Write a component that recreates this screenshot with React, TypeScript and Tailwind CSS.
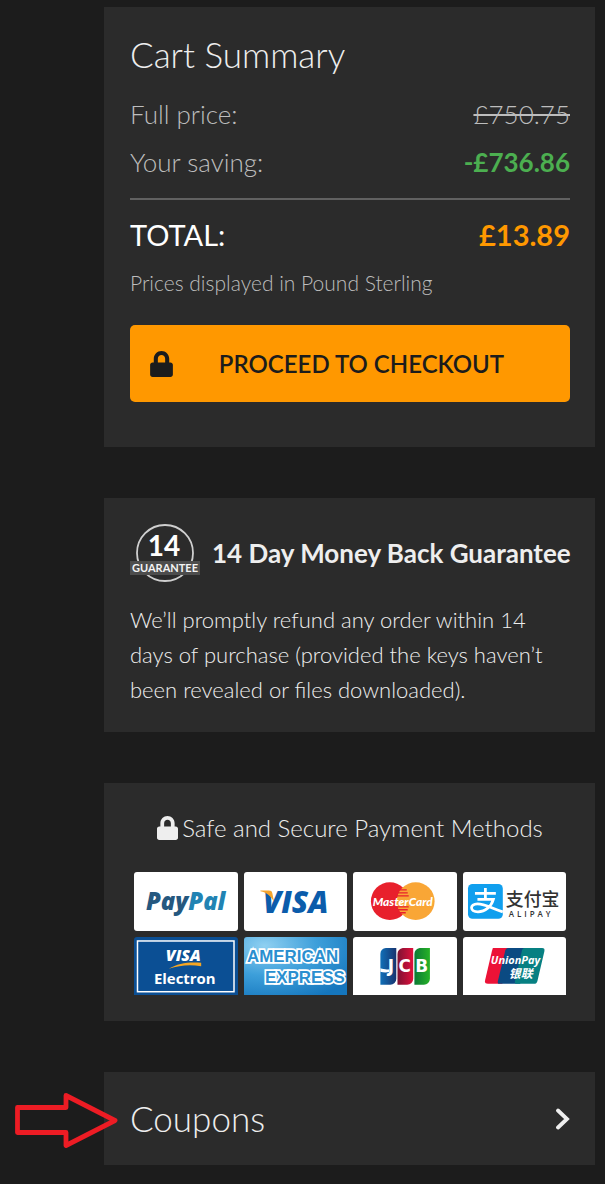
import type { ReactNode } from "react";
import { FaLock } from "react-icons/fa";

function Card({ className = "", children }: { className?: string; children: ReactNode }) {
  return <section className={`bg-[#2b2b2b] pl-[26px] pr-[25px] ${className}`}>{children}</section>;
}

function GuaranteeBadge() {
  return (
    <svg viewBox="0 0 70 60" className="h-[60px] w-[70px] shrink-0" aria-hidden="true">
      <circle cx="35" cy="30" r="28" fill="none" stroke="#cfcfcf" strokeWidth="1.8" />
      <rect x="0" y="38" width="70" height="14" fill="#4d4d4d" />
      <text x="34" y="33" textAnchor="middle" fontSize="28" fontWeight="700" fill="#fff">14</text>
      <text x="35" y="49" textAnchor="middle" fontSize="11" fontWeight="700" fill="#f4f4f4">GUARANTEE</text>
    </svg>
  );
}

function Tile({ label, className = "", children }: { label: string; className?: string; children: ReactNode }) {
  return (
    <li className={`overflow-hidden rounded-t-[3px] ${className}`}>
      <svg viewBox="0 0 104 59" className="block w-full" role="img" aria-label={label} fontFamily="'Open Sans', sans-serif">
        {children}
      </svg>
    </li>
  );
}

function PaymentMethods() {
  return (
    <ul className="mx-1 grid grid-cols-4 gap-[6px]">
      <Tile label="PayPal" className="rounded-b-[3px] bg-white">
        <text x="12" y="38" fontSize="24" fontWeight="800" fontStyle="italic" fill="#25587f">
          Pay<tspan fill="#2183b3">Pal</tspan>
        </text>
      </Tile>

      <Tile label="Visa" className="rounded-b-[3px] bg-white">
        <text x="19" y="41" fontSize="30" fontWeight="800" fontStyle="italic" fill="#0b5cab">VISA</text>
        <path d="M16.500 18.500h8.500c2 0 3 .8 3.400 2.500l1.800 9C27 24 22.500 20.600 16.500 19.300z" fill="#f5a32c" />
      </Tile>

      <Tile label="MasterCard" className="rounded-b-[3px] bg-white">
        <circle cx="37" cy="29.300" r="19" fill="#e8202c" />
        <circle cx="63" cy="29.300" r="19" fill="#f9a636" />
        <path d="M46 18h8M45 21h10M44 24h12M44 35h12M45 38h10M47 41h6" stroke="#e8202c" strokeWidth="1.400" />
        <text x="50" y="34" textAnchor="middle" fontSize="12" fontWeight="900" fontStyle="italic" fontFamily="Lato, sans-serif" fill="#fff">
          MasterCard
        </text>
      </Tile>

      <Tile label="Alipay" className="rounded-b-[3px] bg-white">
        <rect x="5" y="12" width="35" height="35" rx="4.500" fill="#109fee" />
        <g fill="none" stroke="#fff" strokeWidth="2.800">
          <path d="M12 21.500h21M22.500 16v11M14.500 27.500h16c-2 7-8 12.500-15.500 12.500-8.500 0-8.500-8-.5-8 8 0 14 4.500 25.500 8" />
        </g>
        <text x="43" y="34" fontSize="18" fontWeight="500" fontFamily="'Noto Sans CJK SC', sans-serif" fill="#333">支付宝</text>
        <text x="46" y="45" fontSize="8" fontWeight="600" className="tracking-[3px]" fill="#333">ALIPAY</text>
      </Tile>

      <Tile label="Visa Electron" className="bg-[#0b4f94]">
        <rect x="3.500" y="4" width="97" height="51" fill="none" stroke="#fff" strokeWidth="1.500" />
        <text x="32" y="24" fontSize="16" fontWeight="800" fontStyle="italic" fill="#fff">VISA</text>
        <path d="M35 32c9-5.500 20-7 32.500-6v3.500C56 27.500 46 28.500 35 32z" fill="#f5a623" />
        <text x="51" y="47" textAnchor="middle" fontSize="15" fontWeight="700" fill="#fff">Electron</text>
      </Tile>

      <Tile label="American Express">
        <defs>
          <radialGradient id="amex" cx="0.200" cy="0.150" r="1">
            <stop offset="0" stopColor="#8fd0f1" />
            <stop offset="0.500" stopColor="#3d9fda" />
            <stop offset="1" stopColor="#1576bd" />
          </radialGradient>
        </defs>
        <rect width="104" height="59" fill="url(#amex)" />
        <g fontSize="17" fontWeight="700" fontFamily="'Liberation Sans', sans-serif" fill="#2a8fd0" stroke="#fff" strokeWidth="3.500" paintOrder="stroke">
          <text x="3" y="25">AMERICAN</text>
          <text x="21" y="46">EXPRESS</text>
        </g>
      </Tile>

      <Tile label="JCB" className="bg-white">
        <defs>
          <linearGradient id="jcb-blue"><stop stopColor="#1170b8" /><stop offset="1" stopColor="#17336f" /></linearGradient>
          <linearGradient id="jcb-red"><stop stopColor="#7d1233" /><stop offset="1" stopColor="#e0103c" /></linearGradient>
          <linearGradient id="jcb-green"><stop stopColor="#0b7a35" /><stop offset="1" stopColor="#27b227" /></linearGradient>
        </defs>
        <path d="M33 11h10.500v31a6 6 0 0 1-6 6H27.500V17a6 6 0 0 1 5.500-6z" fill="url(#jcb-blue)" />
        <path d="M50 11h10.500v31a6 6 0 0 1-6 6H44.700V17a6 6 0 0 1 5.300-6z" fill="url(#jcb-red)" />
        <path d="M67 11h10.300v31a6 6 0 0 1-6 6H61.700V17a6 6 0 0 1 5.300-6z" fill="url(#jcb-green)" />
        <g fontSize="17" fontWeight="700" fontFamily="'DejaVu Sans', sans-serif" fill="#fff" textAnchor="middle">
          <text x="38" y="35">J</text>
          <text x="52" y="35">C</text>
          <text x="69" y="35">B</text>
        </g>
        <path d="M27.500 31.500c3.500 1.200 7 1.500 9 .8v3c-3 .8-6.500.5-9-.3z" fill="#fff" />
      </Tile>

      <Tile label="UnionPay" className="bg-white">
        <path d="M30 11h18l-8.500 36H25c-2.500 0-3.300-1-2.800-3.500l7-30z" fill="#ec1237" />
        <path d="M45.500 11h20l-8 36h-21c-1.500 0-1.800-1-1.500-2.500l7.500-31c.4-1.600 1.400-2.500 3-2.500z" fill="#0b4a82" />
        <path d="M62 11h17.500c2 0 2.800 1.200 2.300 3.200l-7 30c-.5 2-1.600 2.800-3.500 2.800H54c-1.800 0-2.200-1-1.800-2.600l7-30.500C59.500 12 60.500 11 62 11z" fill="#078082" />
        <text x="28" y="27" fontSize="11" fontWeight="700" fontStyle="italic" fill="#fff">UnionPay</text>
        <text x="46" y="41" fontSize="12" fontWeight="700" fontStyle="italic" fontFamily="'Noto Sans CJK SC', sans-serif" fill="#fff">银联</text>
      </Tile>
    </ul>
  );
}

export default function App() {
  return (
    <main className="min-h-screen bg-[#1c1c1c] pt-[7px] pr-[10px] pb-[19px] pl-[104px] font-['Lato',sans-serif] font-light text-[#eee]">
      <div className="flex flex-col gap-[51px]">
        <Card className="pt-[23px] pb-[45px]">
          <h2 className="text-[35px] leading-[48px]">Cart Summary</h2>
          <dl className="mt-3 text-[26px] leading-[48px] text-[#bdbdbd]">
            <div className="flex justify-between">
              <dt>Full price:</dt>
              <dd className="line-through">£750.75</dd>
            </div>
            <div className="flex justify-between">
              <dt>Your saving:</dt>
              <dd className="font-bold text-[#4caf50]">-£736.86</dd>
            </div>
            <div className="mt-3 flex justify-between border-t-2 border-[#616161] pt-[11px] text-[29px]">
              <dt className="font-normal text-white">TOTAL:</dt>
              <dd className="font-bold text-[#ff9800]">£13.89</dd>
            </div>
          </dl>
          <p className="mt-2 text-[21px] leading-8 text-[#bdbdbd]">Prices displayed in Pound Sterling</p>
          <button type="button" className="mt-[26px] flex h-[77px] w-full items-center rounded-[5px] bg-[#ff9800] px-5 text-[24px] font-semibold text-[#1c1c1c]">
            <FaLock className="h-[26px] w-[23px] shrink-0" />
            <span className="flex-1 text-center">PROCEED TO CHECKOUT</span>
          </button>
        </Card>

        <Card className="pt-[25px] pb-[25px]">
          <div className="flex items-center gap-3">
            <GuaranteeBadge />
            <h3 className="text-[26px] font-bold whitespace-nowrap">14 Day Money Back Guarantee</h3>
          </div>
          <p className="mt-[19px] text-[22px] leading-[35px]">
            We’ll promptly refund any order within 14 days of purchase (provided the keys haven’t been revealed or files downloaded).
          </p>
        </Card>

        <Card className="pt-[25px] pb-[26px]">
          <h3 className="mb-6 flex items-center justify-center gap-1 text-[24px] leading-10">
            <FaLock className="h-6 w-[21px]" />
            Safe and Secure Payment Methods
          </h3>
          <PaymentMethods />
        </Card>

        <div className="relative">
          <Card>
            <button type="button" className="flex w-full items-center justify-between py-[22px] text-left text-[35px] leading-[49px]">
              Coupons
              <svg viewBox="0 0 15 22" className="h-[22px] w-[15px]" fill="none" stroke="#eee" strokeWidth="3.800" strokeLinecap="round" aria-hidden="true">
                <path d="M3 2.500l9 8.500-9 8.500" />
              </svg>
            </button>
          </Card>
          {/* Pointer drawn over the edge of the coupons panel */}
          <svg viewBox="0 0 104 56" className="absolute top-[20px] -left-[90px] h-[56px] w-[104px]" fill="none" stroke="#ed1c24" strokeWidth="4.800" strokeLinejoin="round" aria-hidden="true">
            <path d="M3.500 15.500h48.500V3.500l49 25-49 25V40.500H3.500z" />
          </svg>
        </div>
      </div>
    </main>
  );
}
